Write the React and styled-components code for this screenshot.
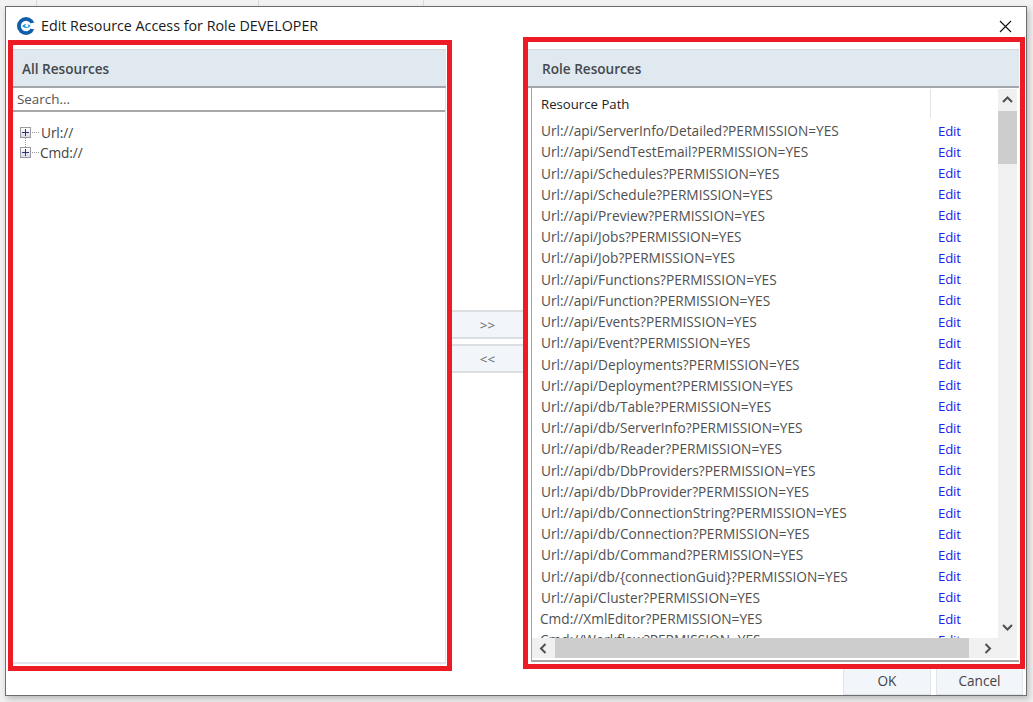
import React from "react";
import styled, { createGlobalStyle } from "styled-components";

const Global = createGlobalStyle`
  html, body { margin: 0; padding: 0; background: #f0f0f0; height: 702px; overflow: hidden; }
  body { font-family: "Open Sans", "Noto Sans", sans-serif; }
`;

const TopStrip = styled.div`
  height: 6px;
  display: flex;
  background: #f3f3f3;
`;
const StripCell = styled.div`
  width: ${(p) => p.$w}px;
  border-right: 1px solid #dcdcdc;
  box-sizing: border-box;
`;
const Win = styled.div`
  position: relative;
  margin-left: 5px;
  width: 1022px;
  height: 690px;
  box-sizing: border-box;
  background: #fff;
  border: 1px solid #6e6e6e;
  box-shadow: 2px 3px 6px rgba(0,0,0,.22);
  display: flex;
  flex-direction: column;
`;
const TitleBar = styled.div`
  height: 30px;
  box-sizing: border-box;
  display: flex;
  align-items: center;
  padding: 6px 14px 0 11px;
  flex: none;
`;
const LogoSvg = styled.svg`
  flex: none;
  margin-top: 2px;
`;
const CloseSvg = styled.svg`
  flex: none;
  margin-top: 2px;
`;
const Title = styled.div`
  margin-left: 6px;
  font-size: 14.3px;
  color: #1a1a1a;
  flex: 1;
`;
const Body = styled.div`
  display: flex;
  align-items: flex-start;
  margin-left: 2px;
`;
const RedBox = styled.div`
  box-sizing: border-box;
  width: ${(p) => p.$w}px;
  height: ${(p) => p.$h}px;
  margin-top: ${(p) => p.$top}px;
  border: 5px solid #ed1c24;
  padding: ${(p) => p.$pt}px 1px 2px 0;
  flex: none;
  display: flex;
  flex-direction: column;
`;
const PanelHeader = styled.div`
  height: 39px;
  flex: none;
  box-sizing: border-box;
  background: #e0e8f0;
  border-top: 1px solid #d3dae1;
  border-bottom: 2px solid #a3a7ab;
  display: flex;
  align-items: center;
  font-size: 13.6px;
  font-weight: 600;
  color: #45484c;
  padding-left: ${(p) => p.$pad}px;
`;
const LeftPanel = styled.div`
  flex: 1;
  display: flex;
  flex-direction: column;
  border-right: 1px solid #e0e0e6;
  border-bottom: 2px solid #e2e4ec;
  box-sizing: border-box;
`;
const Search = styled.div`
  height: 24px;
  flex: none;
  box-sizing: border-box;
  border-bottom: 2px solid #a8a8a8;
  font-size: 13.4px;
  color: #555;
  padding: 1px 0 0 4px;
  line-height: 20px;
`;
const Tree = styled.div`
  padding: 10px 0 0 7px;
`;
const TreeRow = styled.div`
  position: relative;
  height: 20px;
  display: flex;
  align-items: center;
  font-size: 13.7px;
  color: #444;
  letter-spacing: -0.1px;
`;
const Expander = styled.span`
  position: relative;
  width: 11px;
  height: 11px;
  box-sizing: border-box;
  border: 1px solid #9a9aa2;
  background: linear-gradient(#fff, #d8dae4);
  flex: none;
  &::before { content: ""; position: absolute; left: 1px; right: 1px; top: 4px; height: 1px; background: #33337a; }
  &::after { content: ""; position: absolute; top: 1px; bottom: 1px; left: 4px; width: 1px; background: #33337a; }
`;
const Dots = styled.span`
  width: 7px;
  margin: 0 ${(p) => p.$gap}px 0 1px;
  border-top: 1px dotted #999;
  flex: none;
`;
const VDots = styled.span`
  position: absolute;
  left: 5px;
  top: 16px;
  height: 9px;
  border-left: 1px dotted #999;
`;
const Middle = styled.div`
  width: 71px;
  flex: none;
  margin-top: 273px;
  display: flex;
  flex-direction: column;
  gap: 5px;
`;
const ArrowBtn = styled.div`
  height: 29px;
  box-sizing: border-box;
  background: #f2f5f9;
  border-top: 2px solid #dcdfe2;
  border-bottom: 2px solid #dcdfe2;
  display: flex;
  align-items: center;
  justify-content: center;
  font-size: 13.5px;
  color: #666;
`;
const RightPanel = styled.div`
  flex: 1;
  min-height: 0;
  display: flex;
  flex-direction: column;
`;
const Grid = styled.div`
  flex: 1;
  min-height: 0;
  margin-left: 3px;
  box-sizing: border-box;
  border-left: 1px solid #a5a5a5;
  border-bottom: 2px solid #a5a5a5;
  display: grid;
  grid-template-columns: 1fr 19px;
  grid-template-rows: 1fr 20px;
  padding: 0 2px 2px 0;
`;
const GridMain = styled.div`
  overflow: hidden;
  min-height: 0;
`;
const ColHead = styled.div`
  height: 32px;
  display: flex;
  align-items: center;
  font-size: 13.2px;
  color: #222;
  padding-left: 9px;
  position: relative;
  box-sizing: border-box;
`;
const ColDivider = styled.span`
  position: absolute;
  left: 398px;
  top: 1px;
  bottom: 2px;
  width: 1px;
  background: #e4e4e4;
`;
const Row = styled.div`
  height: 21.22px;
  display: flex;
  align-items: center;
  font-size: 13.7px;
  color: #505050;
  white-space: nowrap;
  padding-left: ${(p) => p.$pad}px;
`;
const Path = styled.span`
  width: ${(p) => 397 - p.$pad + 9}px;
  flex: none;
`;
const EditLink = styled.span`
  color: #2222ee;
  font-size: 13.2px;
  letter-spacing: -0.2px;
`;
const VScroll = styled.div`
  background: #f0f0f0;
  display: flex;
  flex-direction: column;
  align-items: center;
  justify-content: space-between;
  min-height: 0;
  position: relative;
  margin-top: 1px;
`;
const ThumbV = styled.div`
  position: absolute;
  top: 22px;
  left: 0;
  width: 100%;
  height: 53px;
  background: #cdcdcd;
`;
const HScroll = styled.div`
  grid-column: 1 / 3;
  background: #f0f0f0;
  display: flex;
  align-items: center;
  height: 20px;
`;
const ArrowCell = styled.div`
  width: ${(p) => p.$w}px;
  height: ${(p) => p.$h || 20}px;
  flex: none;
  display: flex;
  align-items: center;
  justify-content: center;
`;
const ThumbH = styled.div`
  height: 100%;
  width: 414px;
  background: #cdcdcd;
  flex: none;
`;
const Footer = styled.div`
  position: absolute;
  right: 3px;
  bottom: 0;
  display: flex;
  gap: 5px;
`;
const FootBtn = styled.div`
  width: ${(p) => p.$w}px;
  height: 26px;
  box-sizing: border-box;
  background: #f2f5f9;
  border-left: 1px solid #e0e5ea;
  border-right: 1px solid #e0e5ea;
  border-bottom: 1px solid #dde2e7;
  padding-bottom: 2px;
  display: flex;
  align-items: center;
  justify-content: center;
  font-size: 13.6px;
  color: #444;
`;
const ArrowSvg = styled.svg`
  display: block;
  flex: none;
`;

const Logo = () => (
  <LogoSvg width="18" height="18" viewBox="0 0 18 18">
    <circle cx="9" cy="9" r="9" fill="#0f5fa8" />
    <circle cx="9" cy="9" r="5.2" fill="#fff" />
    <path d="M13.5 6.2 L18 5.4 L18 12.6 L13.5 11.8 Z" fill="#fff" />
    <path d="M5 9 Q9 4.8 13.8 9 Q9 13.2 5 9 Z" fill="#1e9ad6" />
    <circle cx="9.8" cy="8.6" r="1.5" fill="#fff" />
  </LogoSvg>
);

const Chevron = ({ dir }) => {
  const d = {
    up: "M1 7 L5.5 2.5 L10 7",
    down: "M1 3 L5.5 7.5 L10 3",
    left: "M7.5 1 L3 5.5 L7.5 10",
    right: "M3.5 1 L8 5.5 L3.5 10",
  }[dir];
  return (
    <ArrowSvg width="11" height="11" viewBox="0 0 11 11">
      <path d={d} fill="none" stroke="#505050" strokeWidth="2" />
    </ArrowSvg>
  );
};

const paths = [
  "Url://api/ServerInfo/Detailed?PERMISSION=YES",
  "Url://api/SendTestEmail?PERMISSION=YES",
  "Url://api/Schedules?PERMISSION=YES",
  "Url://api/Schedule?PERMISSION=YES",
  "Url://api/Preview?PERMISSION=YES",
  "Url://api/Jobs?PERMISSION=YES",
  "Url://api/Job?PERMISSION=YES",
  "Url://api/Functions?PERMISSION=YES",
  "Url://api/Function?PERMISSION=YES",
  "Url://api/Events?PERMISSION=YES",
  "Url://api/Event?PERMISSION=YES",
  "Url://api/Deployments?PERMISSION=YES",
  "Url://api/Deployment?PERMISSION=YES",
  "Url://api/db/Table?PERMISSION=YES",
  "Url://api/db/ServerInfo?PERMISSION=YES",
  "Url://api/db/Reader?PERMISSION=YES",
  "Url://api/db/DbProviders?PERMISSION=YES",
  "Url://api/db/DbProvider?PERMISSION=YES",
  "Url://api/db/ConnectionString?PERMISSION=YES",
  "Url://api/db/Connection?PERMISSION=YES",
  "Url://api/db/Command?PERMISSION=YES",
  "Url://api/db/{connectionGuid}?PERMISSION=YES",
  "Url://api/Cluster?PERMISSION=YES",
  "Cmd://XmlEditor?PERMISSION=YES",
  "Cmd://Workflow?PERMISSION=YES",
];

export default function App() {
  return (
    <>
      <Global />
      <TopStrip>
        <StripCell $w={37} />
        <StripCell $w={222} />
        <StripCell $w={165} />
      </TopStrip>
      <Win>
        <TitleBar>
          <Logo />
          <Title>Edit Resource Access for Role DEVELOPER</Title>
          <CloseSvg width="13" height="13" viewBox="0 0 13 13">
            <path d="M1 1 L12 12 M12 1 L1 12" stroke="#111" strokeWidth="1.1" />
          </CloseSvg>
        </TitleBar>
        <Body>
          <RedBox $w={444} $h={631} $top={3} $pt={4}>
            <PanelHeader $pad={9}>All Resources</PanelHeader>
            <LeftPanel>
              <Search>Search...</Search>
              <Tree>
                <TreeRow>
                  <Expander />
                  <Dots $gap={2} />
                  Url://
                  <VDots />
                </TreeRow>
                <TreeRow>
                  <Expander />
                  <Dots $gap={1} />
                  Cmd://
                </TreeRow>
              </Tree>
            </LeftPanel>
          </RedBox>
          <Middle>
            <ArrowBtn>&gt;&gt;</ArrowBtn>
            <ArrowBtn>&lt;&lt;</ArrowBtn>
          </Middle>
          <RedBox $w={502} $h={632} $top={0} $pt={7}>
            <PanelHeader $pad={14}>Role Resources</PanelHeader>
            <RightPanel>
              <Grid>
                <GridMain>
                  <ColHead>
                    Resource Path
                    <ColDivider />
                  </ColHead>
                  {paths.map((p) => {
                    const pad = p.startsWith("Cmd") ? 8 : 9;
                    return (
                      <Row key={p} $pad={pad}>
                        <Path $pad={pad}>{p}</Path>
                        <EditLink>Edit</EditLink>
                      </Row>
                    );
                  })}
                </GridMain>
                <VScroll>
                  <ArrowCell $w={19} $h={22}><Chevron dir="up" /></ArrowCell>
                  <ThumbV />
                  <ArrowCell $w={19} $h={22}><Chevron dir="down" /></ArrowCell>
                </VScroll>
                <HScroll>
                  <ArrowCell $w={23}><Chevron dir="left" /></ArrowCell>
                  <ThumbH />
                  <ArrowCell $w={37}><Chevron dir="right" /></ArrowCell>
                </HScroll>
              </Grid>
            </RightPanel>
          </RedBox>
        </Body>
        <Footer>
          <FootBtn $w={88}>OK</FootBtn>
          <FootBtn $w={87}>Cancel</FootBtn>
        </Footer>
      </Win>
    </>
  );
}
